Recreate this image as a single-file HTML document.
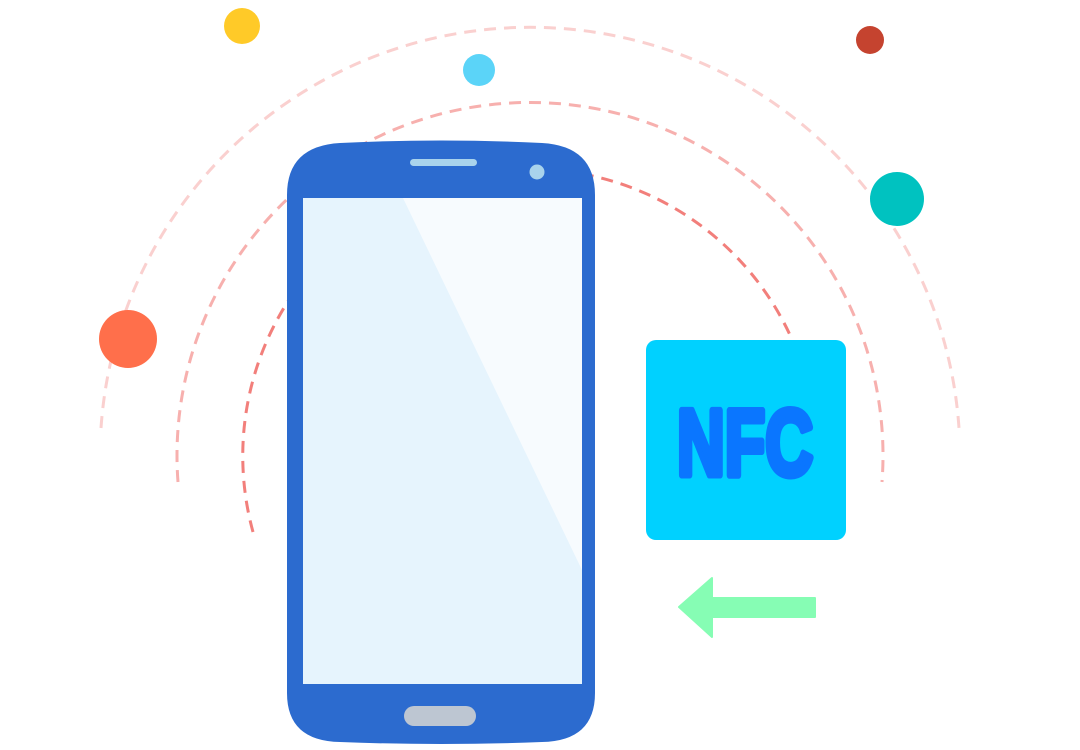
<!DOCTYPE html>
<html><head><style>html,body{margin:0;padding:0;background:#fff;width:1080px;height:750px;overflow:hidden}</style></head>
<body>
<svg width="1080" height="750" viewBox="0 0 1080 750" xmlns="http://www.w3.org/2000/svg">
<g fill="none" stroke-width="3" stroke-dasharray="12 8">
<path d="M101 428 A430 430 0 0 1 959 428" stroke="#fad0cf"/>
<path d="M178 482 A353 353 0 1 1 882 482" stroke="#f7b0ae"/>
<path d="M253 532 A287 287 0 0 1 790 335" stroke="#f27f7b"/>
</g>
<circle cx="242" cy="26" r="18" fill="#ffca28"/>
<circle cx="479" cy="70" r="16" fill="#5bd4f8"/>
<circle cx="870" cy="40" r="14" fill="#c5432f"/>
<circle cx="897" cy="199" r="27" fill="#00c2c0"/>
<circle cx="128" cy="339" r="29" fill="#ff6f4b"/>
<path d="M340 143 Q441 138 542 143 Q595 146 595 195 L595 693 Q595 741 542 742 Q441 746 340 742 Q287 741 287 693 L287 195 Q287 146 340 143 Z" fill="#2c6bcf"/>
<rect x="303" y="198" width="279" height="486" fill="#e6f4fd"/>
<path d="M403 198 L582 198 L582 570 Z" fill="#f7fbfe"/>
<rect x="410" y="159" width="67" height="7" rx="3.5" fill="#a9d3ec"/>
<circle cx="537" cy="172" r="7.5" fill="#a9d3ec"/>
<rect x="404" y="706" width="72" height="20" rx="10" fill="#bdc6d2"/>
<rect x="646" y="340" width="200" height="200" rx="10" fill="#00d1ff"/>
<text x="677" y="475" font-family="Liberation Sans, sans-serif" font-weight="bold" font-size="94" fill="#0a76ff" stroke="#0a76ff" stroke-width="7" stroke-linejoin="round" textLength="136" lengthAdjust="spacingAndGlyphs">NFC</text>
<path d="M815 598 L712 598 L712 578 L679 607 L712 637 L712 617 L815 617 Z" fill="#86fdb4" stroke="#86fdb4" stroke-width="2" stroke-linejoin="round"/>
</svg>
</body></html>
